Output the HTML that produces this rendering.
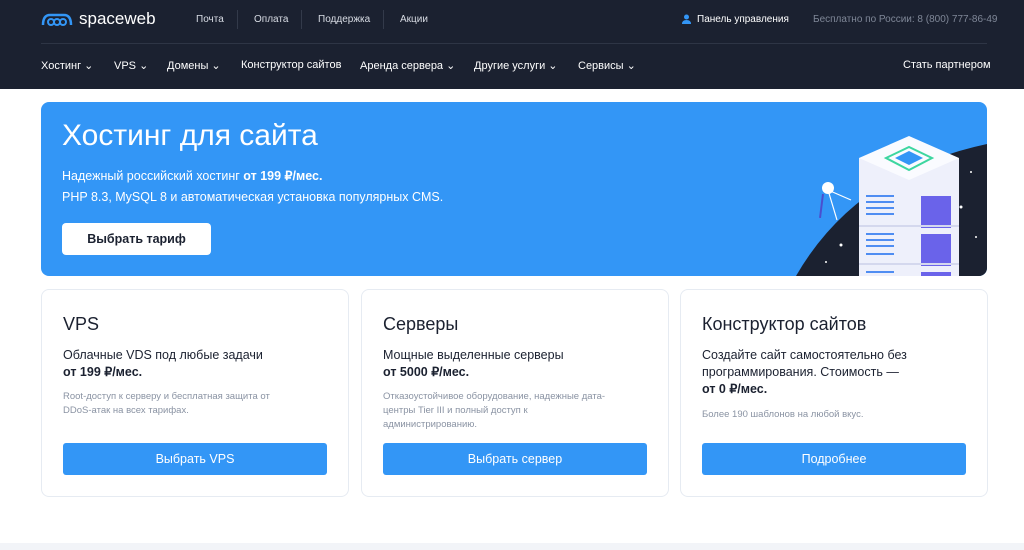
<!DOCTYPE html>
<html><head><meta charset="utf-8"><style>
*{margin:0;padding:0;box-sizing:border-box}
body{width:1024px;height:550px;overflow:hidden;background:#fff;font-family:"Liberation Sans",sans-serif;position:relative}
.hd{position:absolute;left:0;top:0;width:1024px;height:89px;background:#1b2130;color:#fff}
.t{position:absolute;font-size:10px;color:#d8dce4;white-space:nowrap}
.n{position:absolute;top:59px;font-size:11px;color:#fff;white-space:nowrap}
.sep{position:absolute;top:10px;width:1px;height:19px;background:#333a4a}
.hero{position:absolute;left:41px;top:102px;width:946px;height:174px;background:#3396f6;border-radius:8px;overflow:hidden}
.card{position:absolute;top:289px;width:308px;height:208px;border:1px solid #e6ebf2;border-radius:8px}
.card h2{position:absolute;left:21px;top:24px;font-size:18px;font-weight:normal;color:#1b2130}
.card .p{position:absolute;left:21px;top:57px;font-size:12.5px;line-height:17px;color:#1b2130}
.card .s{position:absolute;left:21px;font-size:9.5px;line-height:14px;color:#8a93a3}
.btn{position:absolute;left:21px;top:153px;width:264px;height:32px;background:#3396f6;border-radius:3px;color:#fff;font-size:12.5px;text-align:center;line-height:32px}
</style></head><body>
<div class="hd">
<svg style="position:absolute;left:41px;top:12px" width="32" height="15" viewBox="0 0 32 15"><path d="M2 13 Q2 3 9 3 L23 3 Q30 3 30 13" fill="none" stroke="#3396f6" stroke-width="2.5"/><circle cx="10" cy="10" r="3" fill="none" stroke="#3396f6" stroke-width="2"/><circle cx="16" cy="10" r="3" fill="none" stroke="#3396f6" stroke-width="2"/><circle cx="22" cy="10" r="3" fill="none" stroke="#3396f6" stroke-width="2"/></svg>
<div style="position:absolute;left:79px;top:9px;font-size:17px;color:#fff">spaceweb</div>
<div class="t" style="left:196px;top:14px">Почта</div><div class="sep" style="left:237px"></div>
<div class="t" style="left:254px;top:14px">Оплата</div><div class="sep" style="left:301px"></div>
<div class="t" style="left:318px;top:14px">Поддержка</div><div class="sep" style="left:383px"></div>
<div class="t" style="left:400px;top:14px">Акции</div>
<svg style="position:absolute;left:682px;top:14px" width="9" height="10" viewBox="0 0 9 10"><circle cx="4.5" cy="3" r="2.5" fill="#3396f6"/><path d="M0 10 Q0 6 4.5 6 Q9 6 9 10Z" fill="#3396f6"/></svg>
<div class="t" style="left:697px;top:14px;color:#fff">Панель управления</div>
<div class="t" style="left:813px;top:14px;color:#7f8797">Бесплатно по России: 8 (800) 777-86-49</div>
<div style="position:absolute;left:41px;top:43px;width:946px;height:1px;background:#2e3545"></div>
<div class="n" style="left:41px">Хостинг ⌄</div>
<div class="n" style="left:114px">VPS ⌄</div>
<div class="n" style="left:167px">Домены ⌄</div>
<div class="n" style="left:241px">Конструктор сайтов</div>
<div class="n" style="left:360px">Аренда сервера ⌄</div>
<div class="n" style="left:474px">Другие услуги ⌄</div>
<div class="n" style="left:578px">Сервисы ⌄</div>
<div class="n" style="left:903px">Стать партнером</div>
</div>
<div class="hero">
<div style="position:absolute;left:21px;top:17px;font-size:30px;color:#fff">Хостинг для сайта</div>
<div style="position:absolute;left:21px;top:64px;font-size:12.5px;line-height:21px;color:#fff">Надежный российский хостинг <b>от 199 ₽/мес.</b><br>PHP 8.3, MySQL 8 и автоматическая установка популярных CMS.</div>
<div style="position:absolute;left:21px;top:121px;width:149px;height:32px;background:#fff;border-radius:4px;color:#1b2130;font-size:12.5px;font-weight:bold;text-align:center;line-height:32px">Выбрать тариф</div>
<svg style="position:absolute;left:755px;top:0" width="191" height="174" viewBox="0 0 191 174">
<path d="M0 174 Q60 70 191 42 L191 174Z" fill="#1b2130"/>
<g fill="#fff"><circle cx="150" cy="55" r="1.5"/><circle cx="165" cy="105" r="1.5"/><circle cx="45" cy="143" r="1.5"/><circle cx="30" cy="160" r="1"/><circle cx="180" cy="135" r="1"/><circle cx="175" cy="70" r="1"/></g>
<circle cx="32" cy="86" r="6" fill="#fff"/><path d="M32 88 L55 98 M32 88 L41 118 M27 92 L24 116" stroke="#fff" stroke-width="1.2"/><path d="M27 92 L24 116" stroke="#4a4fcf" stroke-width="2"/>
<g transform="translate(0,12)"><rect x="63" y="44" width="100" height="130" fill="#eef0fb"/>
<path d="M63 44 L113 22 L163 44 L113 66Z" fill="#fafbff"/><path d="M90 44 L113 33 L136 44 L113 56Z" fill="none" stroke="#3dd6a0" stroke-width="2"/><path d="M99 44 L113 37 L127 44 L113 51Z" fill="#3396f6"/>
<rect x="125" y="82" width="30" height="32" fill="#6a63ea"/><rect x="125" y="120" width="30" height="32" fill="#6a63ea"/><rect x="125" y="158" width="30" height="20" fill="#6a63ea"/>
<g stroke="#4f8df2" stroke-width="2"><path d="M70 82h28M70 88h28M70 94h28M70 100h28M70 120h28M70 126h28M70 132h28M70 140h28M70 158h28M70 164h28M70 170h28"/></g>
<path d="M63 112 L163 112 M63 150 L163 150" stroke="#d4d8ee" stroke-width="2"/></g>
</svg>
</div>
<div class="card" style="left:41px"><h2>VPS</h2><div class="p">Облачные VDS под любые задачи<br><b>от 199 ₽/мес.</b></div><div class="s" style="top:100px">Root-доступ к серверу и бесплатная защита от<br>DDoS-атак на всех тарифах.</div><div class="btn">Выбрать VPS</div></div>
<div class="card" style="left:361px"><h2>Серверы</h2><div class="p">Мощные выделенные серверы<br><b>от 5000 ₽/мес.</b></div><div class="s" style="top:100px">Отказоустойчивое оборудование, надежные дата-<br>центры Tier III и полный доступ к<br>администрированию.</div><div class="btn">Выбрать сервер</div></div>
<div class="card" style="left:680px"><h2>Конструктор сайтов</h2><div class="p">Создайте сайт самостоятельно без<br>программирования. Стоимость —<br><b>от 0 ₽/мес.</b></div><div class="s" style="top:118px">Более 190 шаблонов на любой вкус.</div><div class="btn">Подробнее</div></div>
<div style="position:absolute;left:0;top:543px;width:1024px;height:7px;background:#f2f4f8"></div>
</body></html>
